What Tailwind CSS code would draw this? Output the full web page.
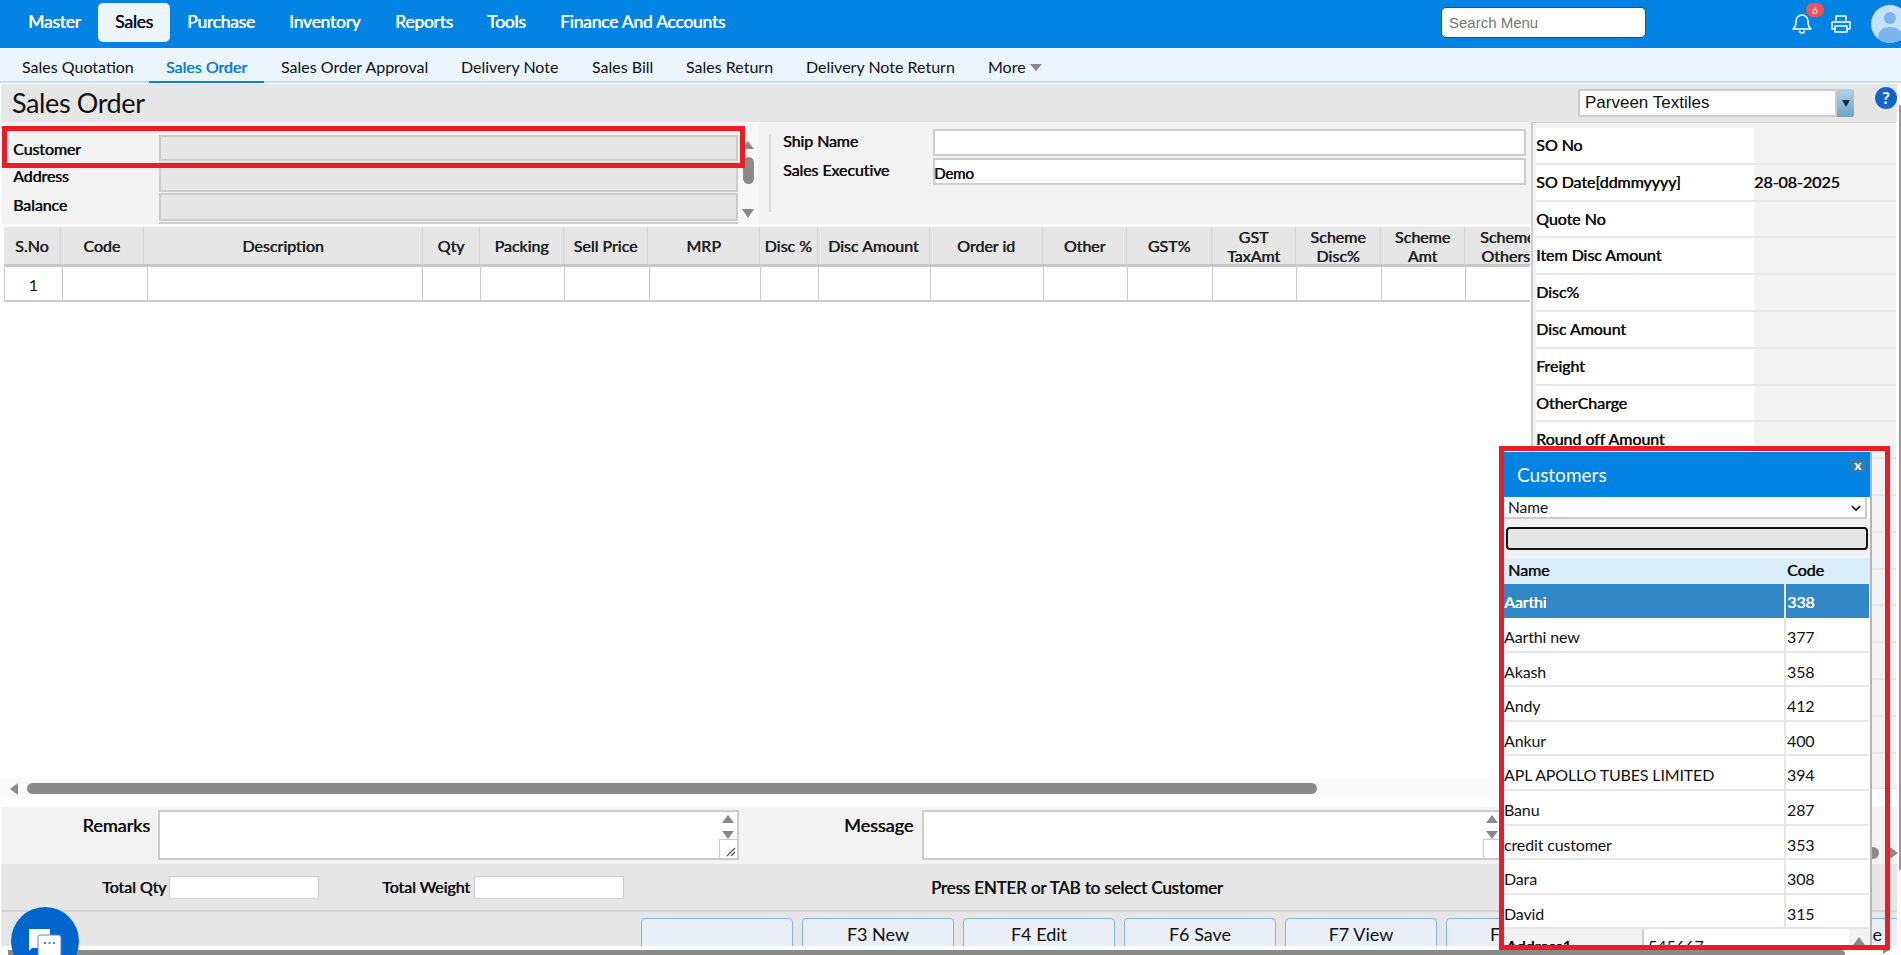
<!DOCTYPE html>
<html lang='en'>
<head>
  <meta charset='UTF-8'>
  <meta name='viewport' content='width=device-width, initial-scale=1.0'>
  <title>Sales Order</title>
  <script src="https://cdn.jsdelivr.net/npm/@tailwindcss/browser@4"></script>
</head>
<body class='bg-white overflow-hidden'>
<div class="relative w-[1901px] h-[955px] overflow-hidden font-['Lato',sans-serif] text-[#111]">

  <!-- top nav -->
  <nav class='h-12 pb-[3px] bg-[#0083e3] flex items-center text-white text-[17.5px] tracking-[-0.25px] [text-shadow:0.5px_0_0_currentColor]'>
    <a class='ml-[28px] w-[70px]'>Master</a>
    <a class='w-[72px] h-[39px] flex items-center justify-center bg-[#ecf4fc] text-[#111] rounded-[5px]'>Sales</a>
    <a class='ml-[17px] w-[102px]'>Purchase</a>
    <a class='w-[106px]'>Inventory</a>
    <a class='w-[92px]'>Reports</a>
    <a class='w-[73px]'>Tools</a>
    <a>Finance And Accounts</a>
    <input placeholder='Search Menu' class="ml-auto w-[205px] h-[31px] px-[7px] bg-white border border-[#14603c] rounded-[5px] font-['Liberation_Sans',sans-serif] tracking-normal text-[15px] [text-shadow:none] placeholder:text-[#777]">
    <div class='relative ml-[146px] w-[20px] h-[22px]'>
      <svg viewBox='0 0 20 22' class='w-[20px] h-[22px]' fill='none' stroke='white' stroke-width='1.6'>
        <path d='M1 17c2-2 3-3 3-8a6 6 0 0 1 12 0c0 5 1 6 3 8z' stroke-linejoin='round'/>
        <path d='M7.5 18.5a2.5 2.5 0 0 0 5 0'/>
      </svg>
      <span class="absolute -top-[9px] left-[14px] w-[18px] h-[14px] rounded-full bg-[#f0525a] text-white text-[10px] leading-[14px] text-center tracking-normal [text-shadow:none]">6</span>
    </div>
    <svg viewBox='0 0 20 18' class='ml-[19px] mt-[2px] w-[20px] h-[18px]' fill='none' stroke='white' stroke-width='1.5'>
      <path d='M5 6V1h10v5M1 7h18v7h-3M4 14H1V7M4 11h12v6H4z' stroke-linejoin='round'/>
    </svg>
    <div class='relative ml-[20px] w-[30px] h-[38px] mt-[3px] overflow-hidden'>
      <div class='relative w-[38px] h-[38px] rounded-full bg-[#c5e1fb] overflow-hidden'>
        <div class='absolute left-[13px] top-[7px] w-[12px] h-[12px] rounded-full bg-[#7ab6ee]'></div>
        <div class='absolute left-[7px] top-[22px] w-[24px] h-[20px] rounded-full bg-[#7ab6ee]'></div>
      </div>
    </div>
  </nav>

  <!-- sub nav -->
  <div class='h-[35px] bg-[#ebf3fb] border-b-2 border-[#c8dfe9] flex text-[16px] leading-[37px]'>
    <a class='ml-[22px] w-[127px]'>Sales Quotation</a>
    <a class='w-[115px] h-[35px] text-center text-[#0a7fdc] border-b-2 border-[#0083e3] [text-shadow:0.4px_0_0_currentColor]'>Sales Order</a>
    <a class='ml-[17px] w-[180px]'>Sales Order Approval</a>
    <a class='w-[131px]'>Delivery Note</a>
    <a class='w-[94px]'>Sales Bill</a>
    <a class='w-[120px]'>Sales Return</a>
    <a class='w-[182px]'>Delivery Note Return</a>
    <a class='flex items-center gap-[4px] h-[33px] mt-[2px]'>More
      <span class='w-0 h-0 border-x-[6px] border-x-transparent border-t-[7px] border-t-[#8a8a8a] mt-[2px]'></span>
    </a>
  </div>

  <!-- title bar -->
  <div class='mt-px ml-px h-[38px] w-[1896px] bg-[#e6e6e6] flex items-center'>
    <h1 class='ml-[11px] text-[27px] tracking-[-0.4px]'>Sales Order</h1>
    <div class="ml-auto flex h-[28px] w-[276px] font-['Liberation_Sans',sans-serif] text-[17px]">
      <div class='flex-1 bg-white border-2 border-[#ccc] pl-[5px] leading-[24px]'>Parveen Textiles</div>
      <div class='w-[17px] rounded-r-[2px] bg-gradient-to-b from-[#b4d2e6] to-[#6ca4c8] flex items-center justify-center'>
        <span class='w-0 h-0 border-x-[4px] border-x-transparent border-t-[7px] border-t-[#0f2a4a]'></span>
      </div>
    </div>
    <div class='ml-[21px] w-[22px] h-[22px] rounded-full bg-[#1565c8] text-white text-[17px] font-bold text-center leading-[22px] -mt-[10px] shrink-0'>?</div>
  </div>

  <div class='flex h-[685px]'>
    <!-- left column -->
    <div class='w-[1531px] shrink-0'>

      <!-- customer / ship form -->
      <section class='ml-px h-[102px] bg-[#f2f2f2] flex overflow-hidden text-[16px] tracking-[-0.1px] [text-shadow:0.5px_0_0_currentColor]'>
        <div class='w-[158px] pl-[12px] pt-[13px] flex flex-col shrink-0'>
          <span class='h-[29px] leading-[28px]'>Customer</span>
          <span class='h-[28px] leading-[24px]'>Address</span>
          <span class='h-[29px] leading-[26px]'>Balance</span>
        </div>
        <div class='w-[579px] pt-[13px] flex flex-col gap-px shrink-0'>
          <div class='h-[26px] bg-[#e6e6e6] border-2 border-[#ccc] shrink-0'></div>
          <div class='h-[30px] bg-[#e6e6e6] border-2 border-[#ccc] shrink-0'></div>
          <div class='h-[28px] bg-[#e6e6e6] border-2 border-[#ccc] shrink-0'></div>
          <div class='h-[29px] bg-[#e6e6e6] border-2 border-[#ccc] shrink-0'></div>
        </div>
        <div class='w-[20px] bg-[#f7f7f7] flex flex-col items-center pt-[19px] shrink-0'>
          <span class='w-0 h-0 border-x-[6px] border-x-transparent border-b-[8px] border-b-[#8a8a8a]'></span>
          <span class='w-[11px] h-[27px] mt-[8px] rounded-full bg-[#8a8a8a]'></span>
          <span class='w-0 h-0 mt-[25px] border-x-[6px] border-x-transparent border-t-[9px] border-t-[#8a8a8a]'></span>
        </div>
        <div class='ml-[11px] mt-[12px] h-[78px] w-[2px] bg-[#ddd] shrink-0'></div>
        <div class='ml-[12px] w-[150px] pt-[7px] flex flex-col shrink-0'>
          <span class='h-[29px] leading-[24px]'>Ship Name</span>
          <span class='h-[29px] leading-[24px]'>Sales Executive</span>
        </div>
        <div class='w-[593px] pt-[7px] flex flex-col gap-[2px] shrink-0'>
          <div class='h-[27px] bg-white border-2 border-[#ccc]'></div>
          <div class='h-[27px] bg-white border-2 border-[#ccc] leading-[26px] text-[15px] indent-[-1px]'>Demo</div>
        </div>
      </section>

      <!-- grid -->
      <div class='mt-[3px] ml-[4px] overflow-hidden w-[1526px] h-[75px]'>
        <div id='gridHead' class='flex h-[40px] bg-[#e6e6e6] border-b-[3px] border-[#c8c8c8] text-[16px] leading-[19px] text-[#222] [text-shadow:0.5px_0_0_currentColor]'></div>
        <div id='gridBody' class='flex h-[35px] border-b-2 border-l border-[#ccc] bg-white'></div>
      </div>

      <!-- grid scrollbar -->
      <div class='h-[19px] mt-[477px] bg-[#fafafa] flex items-center'>
        <span class='ml-[10px] w-0 h-0 border-y-[6px] border-y-transparent border-r-[8px] border-r-[#8a8a8a]'></span>
        <span class='ml-[9px] w-[1290px] h-[11px] rounded-full bg-[#8a8a8a]'></span>
      </div>
    </div>

    <!-- right totals panel -->
    <aside id='totals' class='w-[365px] h-[667px] overflow-hidden border-l-2 border-t border-[#ccc] bg-[#f2f2f2] pt-[5px] pl-[3px] text-[16px] tracking-[-0.05px] shrink-0 [text-shadow:0.5px_0_0_currentColor]'></aside>
  </div>

  <!-- remarks / message -->
  <section class='relative ml-px w-[1896px] h-[57px] pt-[3px] bg-[#f2f2f2] flex text-[18px] [text-shadow:0.5px_0_0_currentColor]'>
    <label class='w-[149px] text-right leading-[30px]'>Remarks</label>
    <div class='ml-[8px] w-[581px] h-[50px] bg-white border-2 border-[#ccc] flex justify-end'>
      <div class='w-[18px] flex flex-col items-center'>
        <span class='mt-[3px] w-0 h-0 border-x-[6px] border-x-transparent border-b-[8px] border-b-[#8a8a8a]'></span>
        <span class='mt-[8px] w-0 h-0 border-x-[6px] border-x-transparent border-t-[8px] border-t-[#8a8a8a]'></span>
        <div class='mt-auto w-[18px] h-[19px] border-t border-l border-[#ccc] flex items-end justify-end'>
          <svg viewBox='0 0 10 10' class='w-[10px] h-[10px] mb-px mr-px' stroke='#555' stroke-width='1.2'><path d='M1 9 9 1M5 9l4-4'/></svg>
        </div>
      </div>
    </div>
    <label class='ml-[105px] w-[69px] text-right leading-[30px] whitespace-nowrap'>Message</label>
    <div class='ml-[9px] w-[581px] h-[50px] bg-white border-2 border-[#ccc] flex justify-end'>
      <div class='w-[18px] flex flex-col items-center'>
        <span class='mt-[3px] w-0 h-0 border-x-[6px] border-x-transparent border-b-[8px] border-b-[#8a8a8a]'></span>
        <span class='mt-[8px] w-0 h-0 border-x-[6px] border-x-transparent border-t-[8px] border-t-[#8a8a8a]'></span>
        <div class='mt-auto w-[18px] h-[19px] border-t border-l border-[#ccc]'></div>
      </div>
    </div>
    <span class='absolute left-[1866px] top-[40px] w-[12px] h-[12px] rounded-full bg-[#8a8a8a]'></span>
    <span class='absolute left-[1889px] top-[40px] w-0 h-0 border-y-[6px] border-y-transparent border-l-[8px] border-l-[#8a8a8a]'></span>
  </section>

  <!-- totals strip -->
  <div class='ml-px w-[1896px] h-[48px] bg-[#e6e6e6] border-b-2 border-[#d5d5d5] flex items-center text-[16px] tracking-[-0.05px] [text-shadow:0.5px_0_0_currentColor]'>
    <span class='ml-[101px] w-[67px] whitespace-nowrap'>Total Qty</span>
    <input class='w-[150px] h-[23px] bg-white border border-[#ccc]'>
    <span class='ml-[63px] w-[92px] whitespace-nowrap'>Total Weight</span>
    <input class='w-[150px] h-[23px] bg-white border border-[#ccc]'>
    <span class='ml-[307px] mt-[2px] whitespace-nowrap text-[16.8px]'>Press ENTER or TAB to select Customer</span>
  </div>

  <!-- function keys -->
  <div class='ml-px w-[1896px] h-[34px] bg-[#e6e6e6] pt-[6px] pl-[640px] flex gap-[9px] overflow-hidden text-[18px] [text-shadow:0.6px_0_0_currentColor]'>
    <button class='w-[152px] h-[40px] shrink-0 pb-[8px] rounded-t-[4px] border border-[#7db6ee] bg-[#e9eef7]'></button>
    <button class='w-[152px] h-[40px] shrink-0 pb-[8px] rounded-t-[4px] border border-[#7db6ee] bg-[#e9eef7]'>F3 New</button>
    <button class='w-[152px] h-[40px] shrink-0 pb-[8px] rounded-t-[4px] border border-[#7db6ee] bg-[#e9eef7]'>F4 Edit</button>
    <button class='w-[152px] h-[40px] shrink-0 pb-[8px] rounded-t-[4px] border border-[#7db6ee] bg-[#e9eef7]'>F6 Save</button>
    <button class='w-[152px] h-[40px] shrink-0 pb-[8px] rounded-t-[4px] border border-[#7db6ee] bg-[#e9eef7]'>F7 View</button>
    <button class='w-[152px] h-[40px] shrink-0 pb-[8px] pl-[43px] text-left rounded-t-[4px] border border-[#7db6ee] bg-[#e9eef7]'>F8</button>
    <button class='w-[152px] h-[40px] shrink-0 rounded-t-[4px] border border-[#7db6ee] bg-[#e9eef7]'></button>
    <button class='w-[152px] h-[40px] shrink-0 pb-[8px] pr-[37px] text-right rounded-t-[4px] border border-[#7db6ee] bg-[#e9eef7]'>Close</button>
  </div>

  <!-- page scrollbar -->
  <div class='h-[9px] bg-white pt-[4px] flex'>
    <span class='ml-[8px] w-[1837px] h-[5px] rounded-tr-[4px] bg-[#8a8a8a]'></span>
    <span class='ml-[38px] w-0 h-0 border-l-[8px] border-l-[#8a8a8a] border-b-[5px] border-b-transparent -mt-[1px]'></span>
  </div>

  <span class='absolute left-[1899px] top-[105px] w-[2px] h-[765px] bg-[#999]'></span>

  <!-- chat launcher -->
  <div class='absolute left-[11px] top-[907px] w-[68px] h-[68px] rounded-full bg-[#0066cc]'>
    <svg viewBox='0 0 36 28' class='absolute left-[16px] top-[21px] w-[36px] h-[28px]'>
      <path d='M2 2a1 1 0 0 1 1-1h19a1 1 0 0 1 1 1v17a1 1 0 0 1-1 1H5l-3 3z' fill='white'/>
      <rect x='11' y='7' width='23' height='21' rx='2' fill='white' stroke='#5b7fe0'/>
      <circle cx='18' cy='15' r='1' fill='#0066cc'/><circle cx='22.5' cy='15' r='1' fill='#0066cc'/><circle cx='27' cy='15' r='1' fill='#0066cc'/>
    </svg>
  </div>

  <!-- customers lookup popup -->
  <div class='absolute left-[1504px] top-[452px] w-[368px] h-[493px] overflow-hidden bg-white border-r-2 border-[#b5b5b5]'>
    <div class='relative h-[45px] bg-[#0083e3] text-white text-[19px] pl-[13px] leading-[46px]'>Customers
      <span class='absolute right-[4px] top-[7px] w-[16px] h-[13px] bg-[#3b79a8] text-[14px] font-bold text-center leading-[11px]'>x</span>
    </div>
    <div class='h-[22px] pt-[2px] mr-[3px] border-r-2 border-b-2 border-[#ccc] flex items-center pl-[4px] text-[15.5px]'>Name
      <svg viewBox='0 0 12 8' class='ml-auto mr-[4px] w-[10px] h-[7px]' fill='none' stroke='#111' stroke-width='2'><path d='M1 1l5 5 5-5'/></svg>
    </div>
    <div class='h-[38px] bg-[#f2f2f2] pl-[2px] pr-[2px] pt-[8px]'>
      <input class='block w-[362px] h-[23px] bg-[#e6e6e6] border-2 border-[#111] rounded-[4px]'>
    </div>
    <div class='mt-px h-[26px] bg-[#d9edfb] flex text-[16px] leading-[24px] [text-shadow:0.4px_0_0_currentColor]'>
      <span class='w-[283px] pl-[4px]'>Name</span><span>Code</span>
    </div>
    <div id='customers' class='text-[16px] tracking-[-0.15px]'></div>
    <div class='h-[20px] bg-[#f2f2f2] flex text-[16px]'>
      <span class='w-[138px] pl-[2px] pt-[5px] [text-shadow:0.4px_0_0_currentColor]'>Address1</span>
      <span class='w-[207px] bg-white border-l-2 border-[#ccc] pl-[4px] pt-[5px]'>545667</span>
      <span class='ml-[4px] mt-[8px] w-0 h-0 border-x-[6px] border-x-transparent border-b-[8px] border-b-[#8a8a8a]'></span>
    </div>
  </div>

  <!-- annotation frames -->
  <div class='absolute left-[2px] top-[126px] w-[743px] h-[42px] border-[5px] border-[#ed1c24]'></div>
  <div class='absolute left-[1499px] top-[446px] w-[391px] h-[504px] border-[5px] border-[#ed1c24]'></div>
</div>

<script>
function make(parent, node, call) {
  node = document.createElement(node)
  parent.append(node)
  if (call) call(node)
  return node
}

const headCols = [
  ['S.No', 56.5], ['Code', 83.5], ['Description', 279], ['Qty', 57], ['Packing', 84], ['Sell Price', 84],
  ['MRP', 112], ['Disc %', 57.5], ['Disc Amount', 112.5], ['Order id', 113], ['Other', 84], ['GST%', 85],
  ['GST<br>TaxAmt', 84], ['Scheme<br>Disc%', 85], ['Scheme<br>Amt', 84], ['Scheme<br>Others:', 65],
]
headCols.forEach(([label, w], i) => {
  make(gridHead, 'div', d => {
    d.className = i === headCols.length - 1
      ? 'shrink-0 flex items-center overflow-hidden pl-[15px] text-center'
      : 'shrink-0 border-r border-[#d4d4d4] flex items-center justify-center text-center overflow-hidden'
    d.style.width = `${w}px`
    make(d, 'span', s => {
      s.className = 'shrink-0 whitespace-nowrap'
      s.innerHTML = label
    })
  })
})

const bodyCols = [58, 85, 275, 58, 84, 85, 111, 58, 112, 113, 84, 85, 84, 85, 84, 65]
bodyCols.forEach((w, i) => {
  make(gridBody, 'div', d => {
    d.className = 'shrink-0 border-r border-[#ccc] text-center text-[16px] leading-[35px]'
    d.style.width = `${w}px`
    if (i === 0) d.textContent = '1'
  })
})

const totals = ['SO No', 'SO Date[ddmmyyyy]', 'Quote No', 'Item Disc Amount', 'Disc%', 'Disc Amount', 'Freight', 'OtherCharge', 'Round off Amount', '', '', '', '', '', '', '', '', '']
totals.forEach((label, i) => {
  make(document.querySelector('#totals'), 'div', row => {
    row.className = 'flex h-[36.8px] border-b-2 border-[#e8e8e8] leading-[34px]'
    make(row, 'span', s => {
      s.className = 'w-[218px] bg-white shrink-0'
      s.textContent = label
    })
    make(row, 'span', s => {
      s.textContent = i === 1 ? '28-08-2025' : ''
    })
  })
})

const customers = [['Aarthi', 338], ['Aarthi new', 377], ['Akash', 358], ['Andy', 412], ['Ankur', 400], ['APL APOLLO TUBES LIMITED', 394], ['Banu', 287], ['credit customer', 353], ['Dara', 308], ['David', 315]]
customers.forEach(([name, code], i) => {
  make(document.querySelector('#customers'), 'div', row => {
    row.className = i === 0
      ? 'flex h-[34px] mr-px bg-[#3287c6] text-white leading-[36px] [text-shadow:0.6px_0_0_currentColor]'
      : 'flex h-[34.6px] mr-px border-b-2 border-[#e6e6e6] leading-[38px]'
    make(row, 'span', s => {
      s.className = 'w-[282px] border-r-2 border-[#e6e6e6]'
      s.textContent = name
    })
    make(row, 'span', s => {
      s.className = 'pl-px'
      s.textContent = code
    })
  })
})
</script>
</body>
</html>
